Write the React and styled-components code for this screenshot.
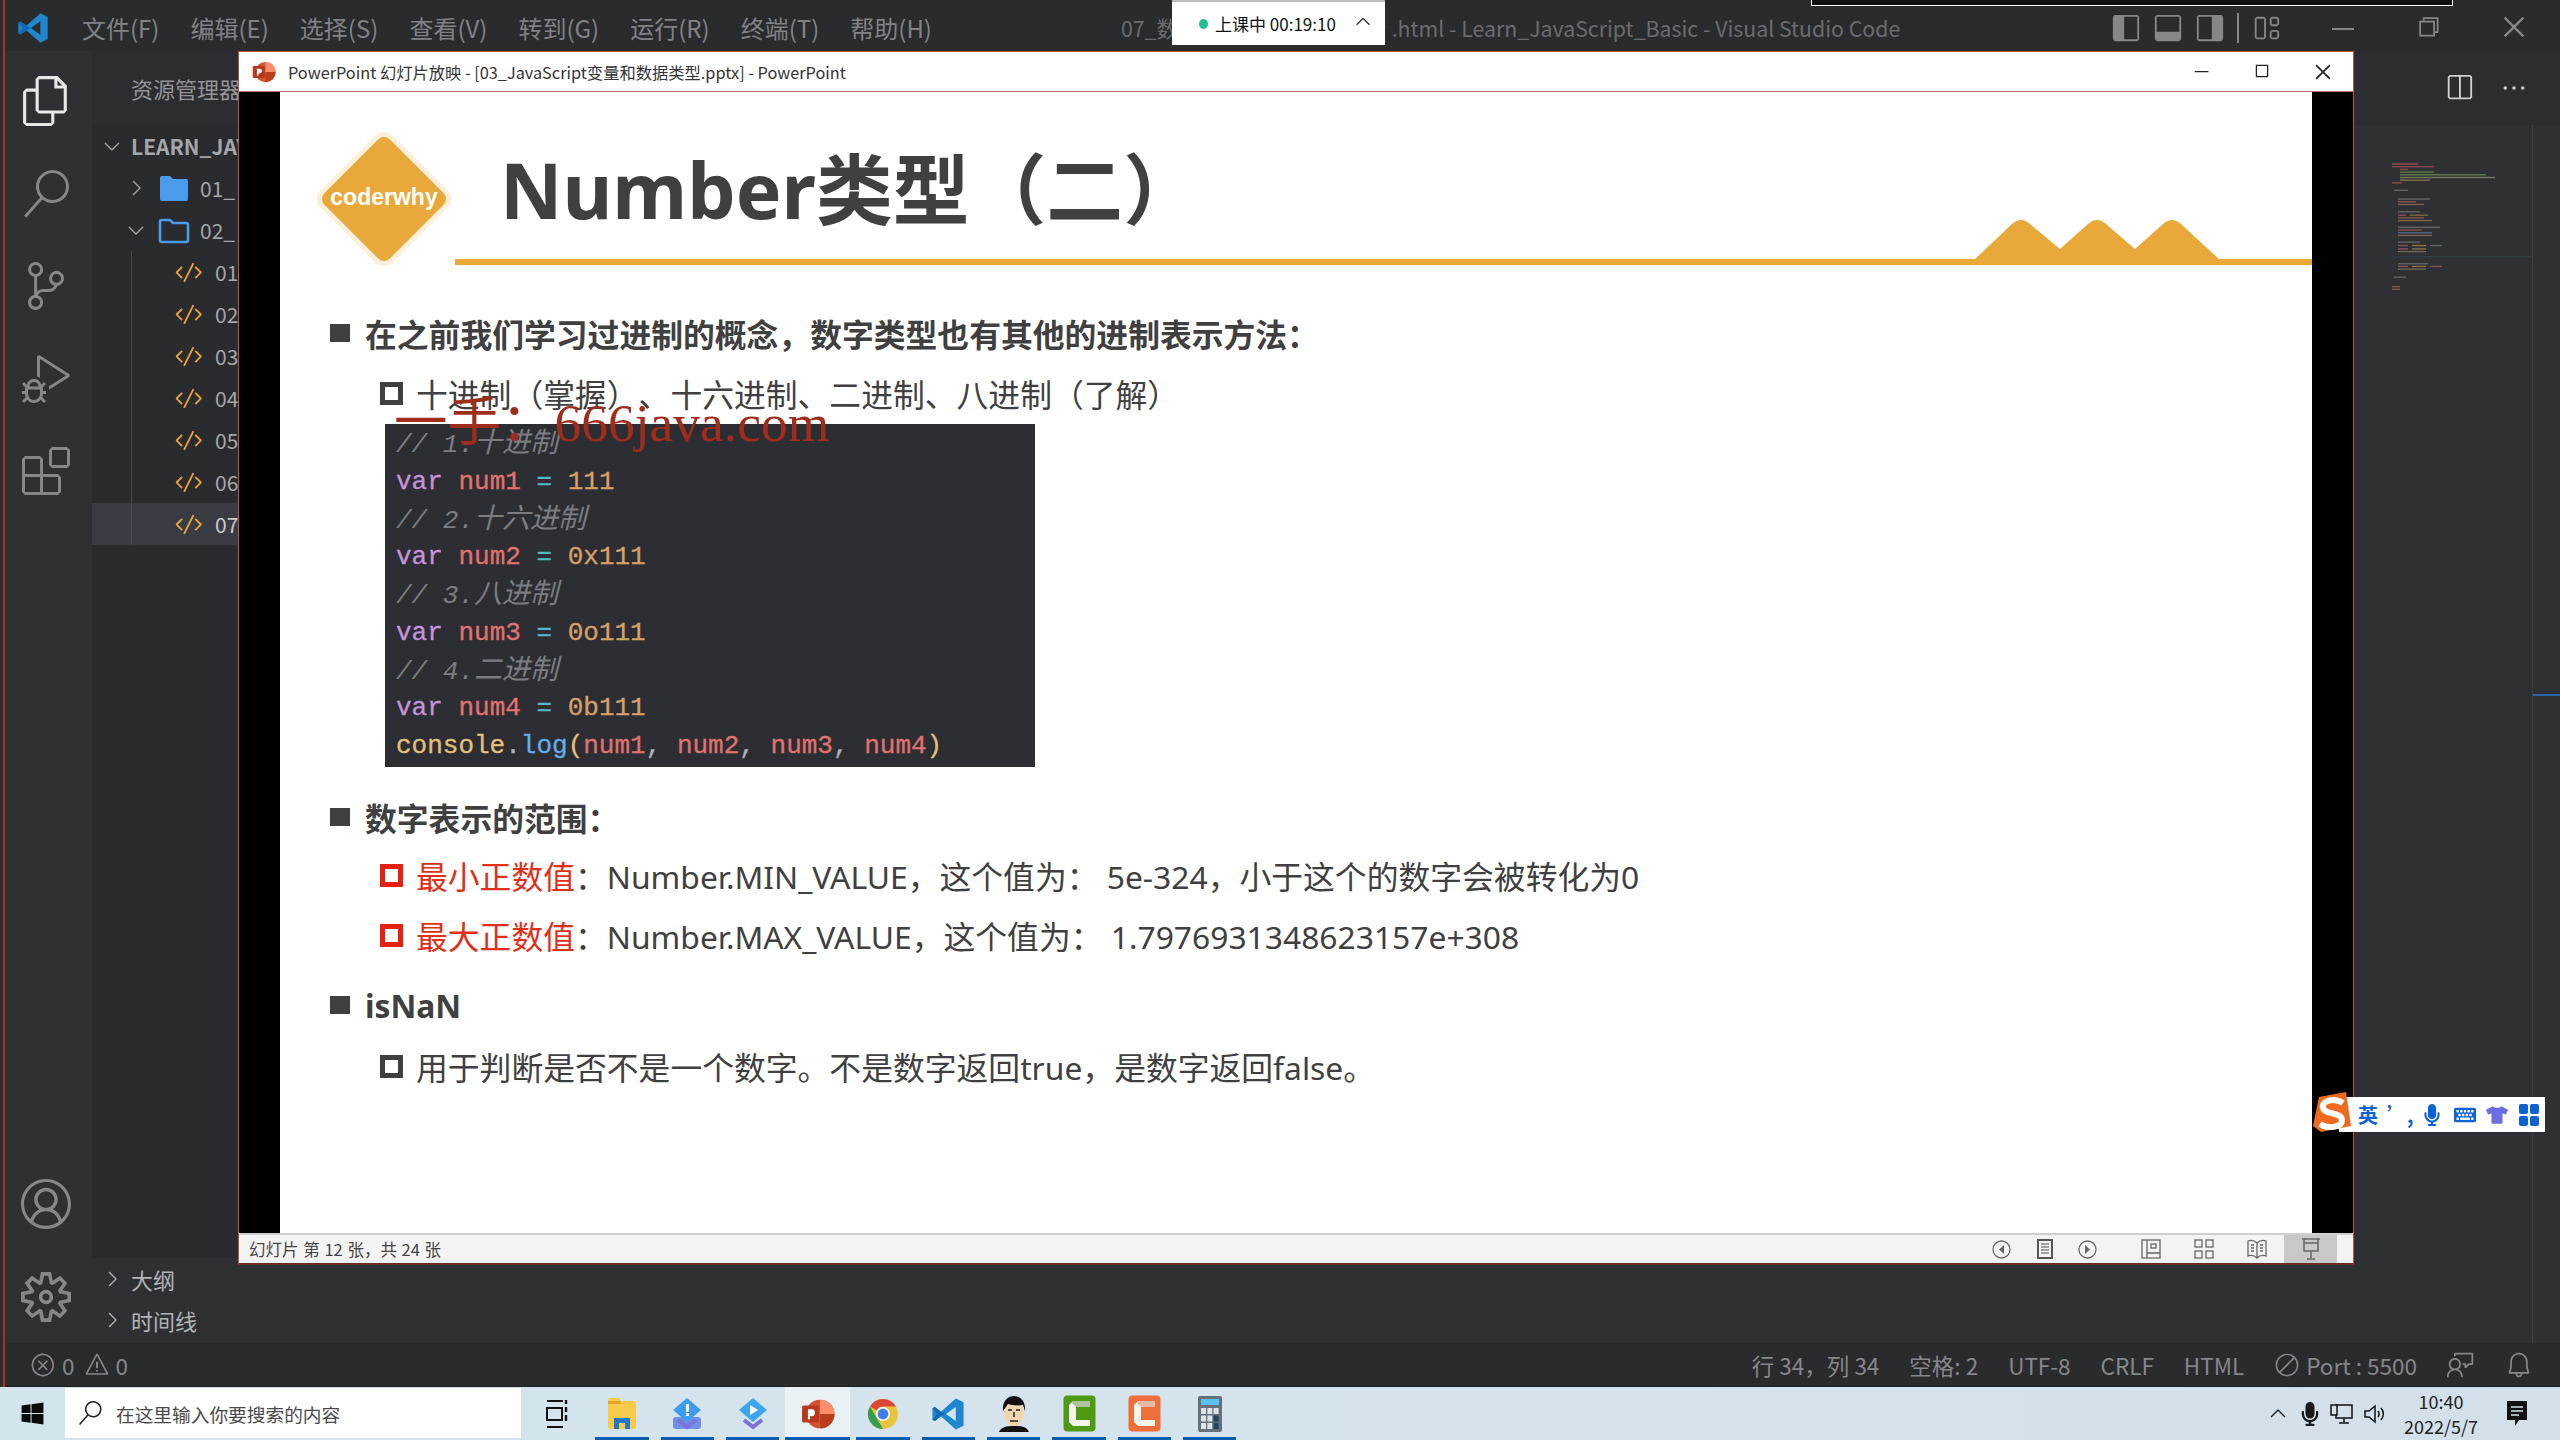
import React from 'react'
import styled, { createGlobalStyle } from 'styled-components'
import {
  VscFiles, VscSearch, VscSourceControl, VscDebugAlt, VscExtensions, VscAccount, VscSettingsGear,
  VscChevronRight, VscChevronDown, VscChevronUp, VscCode, VscError, VscWarning, VscBell, VscFeedback,
  VscSplitHorizontal, VscEllipsis, VscLayoutSidebarLeft, VscLayoutPanel, VscLayoutSidebarRight, VscLayout,
  VscChromeMinimize, VscChromeRestore, VscChromeClose, VscChromeMaximize, VscCircleSlash,
} from 'react-icons/vsc'
import { FaWindows, FaMicrophone, FaKeyboard, FaTshirt } from 'react-icons/fa'

const CJK = `"Noto Sans CJK SC", "Noto Sans", sans-serif`

const GlobalStyle = createGlobalStyle`
  html, body { margin: 0; padding: 0; background: #2a2b2d; }
  * { box-sizing: border-box; }
  body { font-family: ${CJK}; text-spacing-trim: space-all; }
`

const Page = styled.div`
  width: 2560px;
  height: 1440px;
  position: relative;
  overflow: hidden;
  display: flex;
  flex-direction: column;
  background: #2a2b2d;
`
const Code = styled.div`
  flex: 1;
  min-height: 0;
  margin-left: 3px;
  border-left: 2px solid #a8341f;
  display: flex;
  flex-direction: column;
  color: #85878a;
`
const TitleBar = styled.div`
  height: 51px;
  flex-shrink: 0;
  display: flex;
  align-items: center;
  background: #2a2b2d;
  padding: 4px 3px 0 12px;
  font-size: 21.3px;
`
const LogoSlot = styled.div`
  width: 65px;
  display: flex;
`
const MenuGroup = styled.div`
  width: 1039px;
  flex-shrink: 0;
  display: flex;
  gap: 31px;
`
const MenuItem = styled.span`
  white-space: nowrap;
  font-size: 24px;
  color: #808285;
`
const WindowTitle = styled.span`
  white-space: nowrap;
  color: #6a6c70;
`
const LayoutIcons = styled.div`
  margin-left: auto;
  display: flex;
  align-items: center;
  gap: 12px;
  color: #85878a;
`
const Separator = styled.div`
  width: 2px;
  height: 30px;
  background: #85878a;
`
const WinButtons = styled.div`
  margin-left: 18px;
  display: flex;
  color: #85878a;
`
const WinButton = styled.div`
  width: 86px;
  display: flex;
  justify-content: center;
`
const Body = styled.div`
  flex: 1;
  min-height: 0;
  display: flex;
`
const Activity = styled.div`
  width: 87px;
  flex-shrink: 0;
  padding: 4px 5px 0 0;
  display: flex;
  flex-direction: column;
  background: #2e3033;
`
const ActivityItem = styled.div`
  height: 92.5px;
  display: flex;
  align-items: center;
  justify-content: center;
  color: ${(p) => (p.$active ? '#e8e8e8' : '#85878a')};
`
const Spacer = styled.div`
  flex: 1;
`
const Sidebar = styled.div`
  width: 300px;
  flex-shrink: 0;
  display: flex;
  flex-direction: column;
  background: #2a2b2e;
  font-size: 21px;
  color: #a4a6a9;
`
const SidebarHead = styled.div`
  height: 74px;
  padding-left: 39px;
  display: flex;
  align-items: center;
  font-size: 22px;
  color: #939598;
  background: #2c2d30;
`
const Tree = styled.div`
  flex: 1;
`
const Row = styled.div`
  height: 42px;
  position: relative;
  display: flex;
  align-items: center;
  padding-left: ${(p) => p.$indent}px;
  gap: ${(p) => p.$gap}px;
  font-weight: ${(p) => (p.$bold ? 700 : 400)};
  background: ${(p) => (p.$selected ? '#3a3c43' : 'transparent')};
  color: ${(p) => (p.$selected ? '#c9cacc' : 'inherit')};
  white-space: nowrap;
  svg {
    flex-shrink: 0;
  }
`
const FileRow = styled(Row)`
  &::before {
    content: '';
    position: absolute;
    left: 39px;
    top: 0;
    bottom: 0;
    width: 1px;
    background: #45474b;
  }
`
const Panels = styled.div`
  height: 85px;
  background: #2f3034;
  font-weight: 600;
`
const PanelRow = styled(Row)`
  height: 41px;
  color: #b2b4b7;
  font-size: 22px;
`
const Editor = styled.div`
  flex: 1;
  display: flex;
  flex-direction: column;
`
const EditorHead = styled.div`
  height: 74px;
  display: flex;
  align-items: center;
  justify-content: flex-end;
  gap: 26px;
  padding-right: 32px;
  background: #2c2d30;
  color: #d0d1d3;
`
const EditorBody = styled.div`
  flex: 1;
  display: flex;
  justify-content: flex-end;
  background: #2f3034;
`
const Minimap = styled.div`
  width: 141px;
  padding-top: 37px;
  border-right: 1px solid #3e3f43;
`
const ScrollTrack = styled.div`
  width: 27px;
  padding-top: 569px;
`
const ScrollMark = styled.div`
  height: 2px;
  background: #2b66a5;
`
const StatusBar = styled.div`
  height: 44px;
  flex-shrink: 0;
  display: flex;
  align-items: center;
  padding: 0 27px 0 25px;
  font-size: 22.5px;
  background: #2a2b2d;
  color: #85878a;
  border-bottom: 1px solid #1d1d1f;
`
const StatusLeft = styled.div`
  display: flex;
  align-items: center;
  gap: 9px;
`
const StatusRight = styled.div`
  margin-left: auto;
  display: flex;
  align-items: center;
  gap: 30px;
`
const StatusPair = styled.span`
  display: flex;
  align-items: center;
  gap: 6px;
`

/* taskbar */
const Taskbar = styled.div`
  height: 53px;
  flex-shrink: 0;
  display: flex;
  background: linear-gradient(90deg, #d3e4ec, #d6e3ec 60%, #d2dfe9);
`
const StartButton = styled.div`
  width: 65px;
  display: flex;
  align-items: center;
  justify-content: center;
  color: #0b0b0b;
`
const SearchBox = styled.div`
  width: 456px;
  margin: 1px 0 2px;
  padding-left: 13px;
  display: flex;
  align-items: center;
  gap: 14px;
  background: #fff;
  color: #4a4a4a;
  font-size: 18.7px;
`
const TaskSlot = styled.div`
  width: 65.3px;
  position: relative;
  display: flex;
  align-items: center;
  justify-content: center;
  margin-left: ${(p) => (p.$first ? '3px' : 0)};
  background: ${(p) => (p.$active ? '#eaf1f5' : 'transparent')};
  &::after {
    content: '';
    display: ${(p) => (p.$running ? 'block' : 'none')};
    position: absolute;
    left: ${(p) => (p.$active ? 0 : '6px')};
    right: ${(p) => (p.$active ? 0 : '6px')};
    bottom: 0;
    height: 3px;
    background: #0a5cae;
  }
`
const Tray = styled.div`
  margin-left: auto;
  padding-right: 31px;
  display: flex;
  align-items: center;
  color: #1a1a1a;
`
const TrayIcon = styled.div`
  width: 32px;
  display: flex;
  justify-content: center;
`
const Clock = styled.div`
  width: 102px;
  margin-right: 13px;
  text-align: center;
  font-size: 18px;
  line-height: 25px;
  color: #222;
`

/* powerpoint window */
const PptWindow = styled.div`
  position: absolute;
  left: 238px;
  top: 51px;
  width: 2116px;
  height: 1214px;
  display: flex;
  flex-direction: column;
  border: 1px solid #b9583a;
  border-bottom: 2px solid #6d2a22;
  background: #000;
`
const PptTitle = styled.div`
  height: 40px;
  flex-shrink: 0;
  display: flex;
  align-items: center;
  gap: 12px;
  padding-left: 13px;
  background: #fff;
  border-bottom: 1px solid #a87a6e;
  font-size: 16.3px;
  color: #333;
`
const PptButtons = styled.div`
  margin-left: auto;
  display: flex;
  color: #222;
`
const PptButton = styled.div`
  width: 61px;
  display: flex;
  justify-content: center;
`
const Stage = styled.div`
  flex: 1;
  min-height: 0;
  padding: 0 41px;
  display: flex;
`
const Slide = styled.div`
  flex: 1;
  background: #fff;
  color: #404040;
  font-family: "Noto Sans", "Noto Sans CJK SC", sans-serif;
`
const SlideHead = styled.div`
  height: 173px;
  display: flex;
  align-items: flex-end;
  padding-left: 37px;
`
const Logo = styled.div`
  width: 134px;
  height: 134px;
  position: relative;
  margin-bottom: -1px;
  flex-shrink: 0;
  display: flex;
  align-items: center;
  justify-content: center;
  color: #fff;
  font: 700 23px "Liberation Sans", sans-serif;
  svg {
    position: absolute;
    inset: 0;
  }
  span {
    position: relative;
    margin-top: -3px;
  }
`
const HeadMain = styled.div`
  flex: 1;
  height: 173px;
  margin-left: 4px;
  padding: 30px 0 0 45px;
  position: relative;
  display: flex;
  align-items: center;
  border-bottom: 6px solid #e8a93a;
`
const SlideTitle = styled.h1`
  margin: 0;
  font-size: 76.8px;
  font-weight: 700;
  color: #404040;
  line-height: 1;
  white-space: nowrap;
`
const Mountains = styled.svg`
  position: absolute;
  right: 92px;
  bottom: -6px;
`
const SlideBody = styled.div`
  padding: 46px 0 0 50px;
`
const Bullet = styled.div`
  height: 44px;
  display: flex;
  align-items: center;
  margin-top: ${(p) => p.$top || 0}px;
  margin-left: ${(p) => (p.$sub ? 50 : 0)}px;
  gap: ${(p) => (p.$sub ? 13 : 15)}px;
  font-size: 31.8px;
  font-weight: ${(p) => (p.$sub ? 400 : 700)};
  white-space: nowrap;
`
const SolidMark = styled.div`
  width: 20px;
  height: 18px;
  background: #404040;
`
const HollowMark = styled.div`
  width: 23px;
  height: 23px;
  border: 5px solid ${(p) => (p.$red ? '#e5200f' : '#404040')};
`
const Red = styled.span`
  color: #e0301a;
`
const Pre = styled.span`
  white-space: pre;
`
const CodeBlock = styled.div`
  width: 650px;
  height: 343px;
  margin: 9px 0 0 55px;
  padding: 2px 0 0 11px;
  position: relative;
  background: #2d2e33;
  font: 26px/37.75px "Liberation Mono", "Noto Sans CJK SC", monospace;
  -webkit-text-stroke: 0.3px currentColor;
`
const CodeLine = styled.div`
  height: 37.75px;
  white-space: pre;
`
const Tok = styled.span`
  color: ${(p) => p.$c};
`
const Comment = styled.span`
  color: #7a7d84;
  font-style: italic;
  -webkit-text-stroke: 0;
  b {
    font-weight: 400;
    font-size: 28px;
    line-height: 1;
    font-family: ${CJK};
  }
`
const Watermark = styled.div`
  position: absolute;
  left: 9px;
  top: -33px;
  font: 53.5px/1.2 "Liberation Serif", "Noto Sans CJK SC", serif;
  color: #a02c1c;
  white-space: nowrap;
  -webkit-text-stroke: 0;
`
const PptStatus = styled.div`
  height: 30px;
  flex-shrink: 0;
  display: flex;
  align-items: center;
  padding-left: 10px;
  background: #f3f3f3;
  border-top: 2px solid #cfcfcf;
  color: #444;
  font-size: 16.5px;
  word-spacing: 1px;
`
const ViewIcons = styled.div`
  margin-left: auto;
  margin-right: 16px;
  display: flex;
  height: 100%;
  color: #666;
`
const ViewIcon = styled.div`
  width: ${(p) => p.$w}px;
  margin-left: ${(p) => p.$gap || 0}px;
  display: flex;
  align-items: center;
  justify-content: center;
  background: ${(p) => (p.$on ? '#c8c8c8' : 'transparent')};
`

/* floats */
const ClassPill = styled.div`
  position: absolute;
  left: 1172px;
  top: 0;
  width: 213px;
  height: 45px;
  padding-left: 27px;
  display: flex;
  align-items: center;
  background: #fff;
  border-top: 2px solid #bbb;
  font-size: 17px;
  color: #111;
`
const GreenDot = styled.i`
  width: 9px;
  height: 10px;
  margin-right: 7px;
  border-radius: 50%;
  background: #1fc08e;
`
const PillArrow = styled.div`
  margin-left: 16px;
  margin-top: -3px;
  display: flex;
  color: #222;
`
const TopStrip = styled.div`
  position: absolute;
  left: 1811px;
  top: 0;
  width: 642px;
  height: 6px;
  background: #111;
  border: 1px solid #fff;
  border-top: 0;
`
const ImeBar = styled.div`
  position: absolute;
  left: 2339px;
  top: 1097px;
  width: 206px;
  height: 35px;
  padding-left: 13px;
  display: flex;
  align-items: center;
  background: #fff;
  color: #0d62d6;
  font-size: 20px;
  font-weight: 700;
`
const ImeLogo = styled.svg`
  position: absolute;
  left: -29px;
  top: -6px;
`
const ImeItem = styled.div`
  width: 32.4px;
  display: flex;
  justify-content: center;
  color: ${(p) => p.$c || 'inherit'};
`

function VsLogo({ size }) {
  return (
    <svg width={size} height={size} viewBox="0 0 24 24">
      <path fillRule="evenodd" fill="#1f86d2" d="M17.5 1 23 3.7v16.6L17.5 23 7 13.6l-4.3 3.3L1 16V8l1.7-.9L7 10.4zM17.5 7l-7 5 7 5z" />
      <path fill="#0f6bb4" d="M1 8l1.7-.9L7 10.4 10.5 12 7 13.6l-4.3 3.3L1 16l3.5-4z" />
    </svg>
  )
}

function FolderIcon({ open }) {
  return (
    <svg width="32" height="32" viewBox="0 0 32 32">
      {open ? (
        <path d="M2 8a2 2 0 0 1 2-2h8l3 3h13a2 2 0 0 1 2 2v15a2 2 0 0 1-2 2H4a2 2 0 0 1-2-2z" fill="none" stroke="#4a9bea" strokeWidth="2.6" />
      ) : (
        <path d="M2 6a2 2 0 0 1 2-2h8l3 3h13a2 2 0 0 1 2 2v18a2 2 0 0 1-2 2H4a2 2 0 0 1-2-2z" fill="#4a9bea" />
      )}
    </svg>
  )
}

function PptIcon({ size }) {
  return (
    <svg width={size} height={size} viewBox="0 0 32 32">
      <circle cx="18" cy="16" r="13.5" fill="#d35230" />
      <path d="M18 2.5A13.5 13.5 0 0 1 31.5 16H18z" fill="#ff8f6b" />
      <path d="M18 16h13.5A13.5 13.5 0 0 1 18 29.5z" fill="#ba3e1e" />
      <rect x="1" y="8" width="16" height="16" rx="1.5" fill="#b7381a" />
      <path d="M6.5 21V11.500h3.500a3 3 0 0 1 0 6.500H8.500V21z" fill="#fff" />
    </svg>
  )
}

function ChromeIcon() {
  return (
    <svg width="32" height="32" viewBox="0 0 32 32">
      <circle cx="16" cy="16" r="15" fill="#e8c33b" />
      <path d="M16 1a15 15 0 0 1 13 7.500H16a7.500 7.500 0 0 0-6.500 3.800L3 8.500A15 15 0 0 1 16 1z" fill="#dc4638" />
      <path d="M3 8.500 9.500 19.800 16 31A15 15 0 0 1 3 8.500z" fill="#2f9e4f" />
      <circle cx="16" cy="16" r="7" fill="#fff" />
      <circle cx="16" cy="16" r="5.400" fill="#3f7de8" />
    </svg>
  )
}

function CamtasiaIcon({ bg, dark }) {
  return (
    <svg width="33" height="37" viewBox="0 0 33 37">
      <rect x="0.500" y="0.500" width="32" height="36" rx="4" fill={bg} />
      <path d="M27 6H10L6 10v17l4 4h17v-6H13V12h14z" fill="#f3f5ea" />
      <path d="M27 12H13l-4-4 1-2h17z" fill={dark} opacity="0.35" />
    </svg>
  )
}

function BlueAppIcon({ play }) {
  return (
    <svg width="32" height="34" viewBox="0 0 32 34">
      {!play && <rect x="2" y="20" width="28" height="12" rx="3" fill="#6f8fe8" />}
      <path d="M16 1 30 13 16 25 2 13z" fill={play ? '#3ba7f0' : '#3a9df0'} />
      <path d="M7 23l9 7 9-7" fill="none" stroke="#7b72dc" strokeWidth="4" />
      <path d={play ? 'M13 8l8 5-8 5z' : 'M15 7h3v8h-3zM15 16h3v3h-3z'} fill="#fff" />
    </svg>
  )
}

function FaceIcon() {
  return (
    <svg width="30" height="36" viewBox="0 0 30 36">
      <path d="M0 36c2-5 7-6 15-6s13 1 15 6z" fill="#111" />
      <ellipse cx="15" cy="17" rx="10" ry="13" fill="#f1d5b1" />
      <path d="M4 15C3 5 9 0 15 0s12 5 11 15l-2-6c-5 1-12 0-15-1z" fill="#111" />
      <path d="M9 14h4M17 14h4M15 16v5M11 25h8" stroke="#222" strokeWidth="1.500" />
    </svg>
  )
}

function CalcIcon() {
  const cells = [0, 1, 2]
  return (
    <svg width="24" height="36" viewBox="0 0 24 36">
      <rect width="24" height="36" rx="2" fill="#66707c" />
      <rect x="3" y="3" width="18" height="6" fill="#59c2f0" />
      {cells.map((r) =>
        cells.map((c) => <rect key={`${r}${c}`} x={3 + c * 6.300} y={12 + r * 7.500} width="5" height="6" fill={c === 2 && r > 0 ? '#24425f' : '#dfe3e8'} />)
      )}
    </svg>
  )
}

function FolderApp() {
  return (
    <svg width="30" height="34" viewBox="0 0 30 34">
      <path d="M1 3a2 2 0 0 1 2-2h9l2 3h13a2 2 0 0 1 2 2v24a2 2 0 0 1-2 2H3a2 2 0 0 1-2-2z" fill="#f7ca4a" />
      <path d="M1 4h12l1 3H1z" fill="#dca52a" />
      <path d="M7 32V21h16v11h-5v-6h-6v6z" fill="#1f78c8" />
    </svg>
  )
}

function TaskViewIcon() {
  return (
    <svg width="22" height="28" viewBox="0 0 22 28" fill="none" stroke="#111" strokeWidth="2">
      <path d="M1 1h16M1 27h16" />
      <rect x="1" y="8" width="15" height="12" />
      <path d="M20 0v4M20 7v5M20 15v6" strokeWidth="2.400" />
    </svg>
  )
}

const round = (p) => <svg width="19" height="19" viewBox="0 0 19 19" fill="none" stroke="#666" strokeWidth="1.300"><circle cx="9.500" cy="9.500" r="8.500" /><path d={p} fill="#666" stroke="none" /></svg>

const minimapLines = [
  [42, 0, 26, '#c65b5b'], [46, 0, 42, '#a84f4f'], [50, 8, 8, '#b25555'], [54, 8, 34, '#73995a'], [58, 8, 86, '#6f9a58'], [62, 8, 95, '#8a9a70'], [66, 8, 30, '#a58b55'], [70, 0, 10, '#b05050'],
  [81, 2, 14, '#777'], [94, 6, 32, '#777'], [98, 6, 18, '#a8665c'], [102, 6, 26, '#a86f60'], [113, 6, 22, '#777'], [118, 6, 8, '#b05b60'], [118, 18, 18, '#9b7a4e'],
  [122, 6, 26, '#a5605c'], [126, 6, 34, '#a27a4e'], [136, 6, 42, '#777'], [140, 6, 24, '#a65d5d'], [144, 6, 34, '#4f7fb0'], [148, 6, 34, '#a66d5d'],
  [158, 6, 22, '#777'], [163, 6, 10, '#a5605c'], [163, 20, 14, '#b0864e'], [163, 38, 12, '#777'], [168, 6, 10, '#a5605c'], [168, 20, 14, '#b0864e'], [172, 6, 28, '#8a7a5a'],
  [190, 6, 30, '#777'], [194, 6, 10, '#a5605c'], [194, 20, 14, '#b0864e'], [194, 38, 12, '#a5605c'], [198, 6, 28, '#8a7a5a'], [210, 2, 12, '#777'], [224, 0, 8, '#a5605c'], [228, 0, 8, '#a5605c'],
]

function App() {
  const files = ['01_', '02_', '03_', '04_', '05_', '06_', '07_']
  const menus = ['文件(F)', '编辑(E)', '选择(S)', '查看(V)', '转到(G)', '运行(R)', '终端(T)', '帮助(H)']
  const nums = [
    ['// 1.', '十进制', '1', '111'],
    ['// 2.', '十六进制', '2', '0x111'],
    ['// 3.', '八进制', '3', '0o111'],
    ['// 4.', '二进制', '4', '0b111'],
  ]
  return (
    <Page>
      <GlobalStyle />
      <Code>
        <TitleBar>
          <LogoSlot><VsLogo size={32} /></LogoSlot>
          <MenuGroup>
            {menus.map((m) => <MenuItem key={m}>{m}</MenuItem>)}
          </MenuGroup>
          <WindowTitle>07_数字类型的Number表示 .html - Learn_JavaScript_Basic - Visual Studio Code</WindowTitle>
          <LayoutIcons>
            <VscLayoutSidebarLeft size={30} />
            <VscLayoutPanel size={30} />
            <VscLayoutSidebarRight size={30} />
            <Separator />
            <VscLayout size={30} />
          </LayoutIcons>
          <WinButtons>
            <WinButton><VscChromeMinimize size={32} /></WinButton>
            <WinButton><VscChromeRestore size={28} /></WinButton>
            <WinButton><VscChromeClose size={30} /></WinButton>
          </WinButtons>
        </TitleBar>
        <Body>
          <Activity>
            <ActivityItem $active><VscFiles size={50} /></ActivityItem>
            <ActivityItem><VscSearch size={48} /></ActivityItem>
            <ActivityItem><VscSourceControl size={48} /></ActivityItem>
            <ActivityItem><VscDebugAlt size={48} /></ActivityItem>
            <ActivityItem><VscExtensions size={48} /></ActivityItem>
            <Spacer />
            <ActivityItem><VscAccount size={50} /></ActivityItem>
            <ActivityItem><VscSettingsGear size={50} /></ActivityItem>
          </Activity>
          <Sidebar>
            <SidebarHead>资源管理器</SidebarHead>
            <Tree>
              <Row $indent={8} $gap={7} $bold><VscChevronDown size={24} />LEARN_JAVASCRIPT_BASIC</Row>
              <Row $indent={32} $gap={10}><VscChevronRight size={24} /><FolderIcon />01_</Row>
              <Row $indent={32} $gap={10}><VscChevronDown size={24} /><FolderIcon open />02_</Row>
              {files.map((f, i) => (
                <FileRow key={f} $indent={82} $gap={11} $selected={i === 6}>
                  <VscCode size={30} color="#e8a33d" />{f}
                </FileRow>
              ))}
            </Tree>
            <Panels>
              <PanelRow $indent={8} $gap={7}><VscChevronRight size={24} />大纲</PanelRow>
              <PanelRow $indent={8} $gap={7}><VscChevronRight size={24} />时间线</PanelRow>
            </Panels>
          </Sidebar>
          <Editor>
            <EditorHead>
              <VscSplitHorizontal size={30} />
              <VscEllipsis size={28} />
            </EditorHead>
            <EditorBody>
              <Minimap>
                <svg width="140" height="128" viewBox="0 40 140 190" preserveAspectRatio="none" opacity="0.75">
                  {minimapLines.map(([y, x, w, c]) => <rect key={`${y}-${x}`} x={x} y={y} width={w} height="2" fill={c} />)}
                  <rect x="0" y="180" width="140" height="1.500" fill="#33465c" />
                </svg>
              </Minimap>
              <ScrollTrack><ScrollMark /></ScrollTrack>
            </EditorBody>
          </Editor>
        </Body>
        <StatusBar>
          <StatusLeft>
            <StatusPair><VscError size={26} />0</StatusPair>
            <StatusPair><VscWarning size={26} />0</StatusPair>
          </StatusLeft>
          <StatusRight>
            <span>行 34，列 34</span>
            <span>空格: 2</span>
            <span>UTF-8</span>
            <span>CRLF</span>
            <span>HTML</span>
            <StatusPair><VscCircleSlash size={26} />Port : 5500</StatusPair>
            <VscFeedback size={28} />
            <VscBell size={28} />
          </StatusRight>
        </StatusBar>
      </Code>

      <Taskbar>
        <StartButton><FaWindows size={25} /></StartButton>
        <SearchBox>
          <VscSearch size={24} color="#222" />
          在这里输入你要搜索的内容
        </SearchBox>
        <TaskSlot $first><TaskViewIcon /></TaskSlot>
        <TaskSlot $running><FolderApp /></TaskSlot>
        <TaskSlot $running><BlueAppIcon /></TaskSlot>
        <TaskSlot $running><BlueAppIcon play /></TaskSlot>
        <TaskSlot $running $active><PptIcon size={34} /></TaskSlot>
        <TaskSlot $running><ChromeIcon /></TaskSlot>
        <TaskSlot $running><VsLogo size={34} /></TaskSlot>
        <TaskSlot $running><FaceIcon /></TaskSlot>
        <TaskSlot $running><CamtasiaIcon bg="#4e9a12" dark="#2c6a08" /></TaskSlot>
        <TaskSlot $running><CamtasiaIcon bg="#ef6f3c" dark="#c84d20" /></TaskSlot>
        <TaskSlot $running><CalcIcon /></TaskSlot>
        <Tray>
          <TrayIcon><VscChevronUp size={24} /></TrayIcon>
          <TrayIcon><FaMicrophone size={24} /></TrayIcon>
          <TrayIcon>
            <svg width="24" height="24" viewBox="0 0 24 24" fill="none" stroke="#111" strokeWidth="1.500"><rect x="6" y="3" width="16" height="13" /><path d="M14 16v4M9 21h10" /><rect x="1" y="3" width="6" height="10" fill="#d5e2eb" /></svg>
          </TrayIcon>
          <TrayIcon>
            <svg width="24" height="24" viewBox="0 0 24 24" fill="none" stroke="#111" strokeWidth="1.500"><path d="M3 9h4l6-5v16l-6-5H3z" /><path d="M16 9a5 5 0 0 1 0 6M19 6a9 9 0 0 1 0 12" /></svg>
          </TrayIcon>
          <Clock>10:40<br />2022/5/7</Clock>
          <svg width="24" height="28" viewBox="0 0 24 28"><path d="M2 1h20v19h-8l-4 6v-6H2z" fill="#111" /><path d="M6 7h12M6 11h12M6 15h8" stroke="#d5e2eb" strokeWidth="1.600" /></svg>
        </Tray>
      </Taskbar>

      <PptWindow>
        <PptTitle>
          <PptIcon size={24} />
          PowerPoint 幻灯片放映 - [03_JavaScript变量和数据类型.pptx] - PowerPoint
          <PptButtons>
            <PptButton><VscChromeMinimize size={20} /></PptButton>
            <PptButton><VscChromeMaximize size={20} /></PptButton>
            <PptButton><VscChromeClose size={22} /></PptButton>
          </PptButtons>
        </PptTitle>
        <Stage>
          <Slide>
            <SlideHead>
              <Logo>
                <svg width="134" height="134" viewBox="0 0 134 134">
                  <path d="M67 13 121 67 67 121 13 67z" fill="#fbf0dc" stroke="#fbf0dc" strokeWidth="26" strokeLinejoin="round" />
                  <path d="M67 13 121 67 67 121 13 67z" fill="#e8a93a" stroke="#e8a93a" strokeWidth="16" strokeLinejoin="round" />
                </svg>
                <span>coderwhy</span>
              </Logo>
              <HeadMain>
                <SlideTitle>Number类型（二）</SlideTitle>
                <Mountains width="246" height="48" viewBox="0 0 246 48">
                  <path d="M0 43 38 7Q47 -1 56 7L86 32 114 7Q123 -1 132 7L161 32 189 7Q198 -1 207 7L246 43V48H0z" fill="#e8a93a" />
                </Mountains>
              </HeadMain>
            </SlideHead>
            <SlideBody>
              <Bullet><SolidMark />在之前我们学习过进制的概念，数字类型也有其他的进制表示方法：</Bullet>
              <Bullet $sub $top={16}><HollowMark />十进制（掌握）、十六进制、二进制、八进制（了解）</Bullet>
              <CodeBlock>
                {nums.map(([c, han, n, v]) => (
                  <React.Fragment key={n}>
                    <CodeLine><Comment>{c}<b>{han}</b></Comment></CodeLine>
                    <CodeLine>
                      <Tok $c="#c792dc">var </Tok><Tok $c="#e0726f">num{n} </Tok><Tok $c="#56b6c2">= </Tok><Tok $c="#d8a066">{v}</Tok>
                    </CodeLine>
                  </React.Fragment>
                ))}
                <CodeLine>
                  <Tok $c="#e5c07b">console</Tok><Tok $c="#abb2bf">.</Tok><Tok $c="#61afef">log</Tok><Tok $c="#e5c07b">(</Tok>
                  <Tok $c="#e0726f">num1</Tok><Tok $c="#abb2bf">, </Tok><Tok $c="#e0726f">num2</Tok><Tok $c="#abb2bf">, </Tok><Tok $c="#e0726f">num3</Tok><Tok $c="#abb2bf">, </Tok><Tok $c="#e0726f">num4</Tok><Tok $c="#e5c07b">)</Tok>
                </CodeLine>
                <Watermark>一手：666java.com</Watermark>
              </CodeBlock>
              <Bullet $top={28}><SolidMark />数字表示的范围：</Bullet>
              <Bullet $sub $top={14}><HollowMark $red /><Pre><Red>最小正数值</Red>：Number.MIN_VALUE，这个值为： 5e-324，小于这个的数字会被转化为0</Pre></Bullet>
              <Bullet $sub $top={16}><HollowMark $red /><Pre><Red>最大正数值</Red>：Number.MAX_VALUE，这个值为： 1.7976931348623157e+308</Pre></Bullet>
              <Bullet $top={26}><SolidMark />isNaN</Bullet>
              <Bullet $sub $top={17}><HollowMark />用于判断是否不是一个数字。不是数字返回true，是数字返回false。</Bullet>
            </SlideBody>
          </Slide>
        </Stage>
        <PptStatus>
          幻灯片 第 12 张，共 24 张
          <ViewIcons>
            <ViewIcon $w={43}>{round('M12 5v9L7 9.500z')}</ViewIcon>
            <ViewIcon $w={43}><svg width="16" height="20" viewBox="0 0 16 20" fill="none" stroke="#555"><rect x="1" y="1" width="14" height="18" strokeWidth="2" /><path d="M4 5h8M4 8h8M4 11h8M4 14h8" /></svg></ViewIcon>
            <ViewIcon $w={43}>{round('M7 5v9l5-4.500z')}</ViewIcon>
            <ViewIcon $w={54} $gap={15}><svg width="20" height="20" viewBox="0 0 20 20" fill="none" stroke="#666" strokeWidth="1.300"><rect x="1" y="1" width="18" height="18" /><path d="M6 1v18M6 14h13" /><rect x="10" y="5" width="5" height="4" /></svg></ViewIcon>
            <ViewIcon $w={52}><svg width="20" height="20" viewBox="0 0 20 20" fill="none" stroke="#666" strokeWidth="1.300"><rect x="1" y="1" width="7" height="7" /><rect x="12" y="1" width="7" height="7" /><rect x="1" y="12" width="7" height="7" /><rect x="12" y="12" width="7" height="7" /></svg></ViewIcon>
            <ViewIcon $w={54}><svg width="20" height="20" viewBox="0 0 20 20" fill="none" stroke="#666" strokeWidth="1.300"><path d="M10 4C7 1 4 1 1 2v15c3-1 6-1 9 2 3-3 6-3 9-2V2c-3-1-6-1-9 2zM10 4v15M4 6h3M4 9h3M4 12h3M13 6h3M13 9h3M13 12h3" /></svg></ViewIcon>
            <ViewIcon $w={53} $on><svg width="20" height="24" viewBox="0 0 20 24" fill="none" stroke="#666" strokeWidth="1.500"><path d="M1 2h18M3 2v12h14V2M3 6h14M10 14v7M6 22h8" /></svg></ViewIcon>
          </ViewIcons>
        </PptStatus>
      </PptWindow>

      <TopStrip />
      <ClassPill>
        <GreenDot />上课中 00:19:10
        <PillArrow><VscChevronUp size={22} /></PillArrow>
      </ClassPill>
      <ImeBar>
        <ImeLogo width="42" height="42" viewBox="0 0 42 42">
          <path d="M9 6 36 1l5 34-30 6-8-6z" fill="#ef6a1c" />
          <path d="M33 12C24 6 11 10 13 17s19 4 19 12-15 9-22 4" fill="none" stroke="#fff" strokeWidth="6" />
        </ImeLogo>
        <ImeItem>英</ImeItem>
        <ImeItem>’,</ImeItem>
        <ImeItem><FaMicrophone size={22} /></ImeItem>
        <ImeItem><FaKeyboard size={22} /></ImeItem>
        <ImeItem $c="#6c6fe0"><FaTshirt size={22} /></ImeItem>
        <ImeItem>
          <svg width="20" height="22" viewBox="0 0 20 22" fill="#0d62d6"><rect width="9" height="10" rx="2" /><rect x="11" width="9" height="10" rx="2" /><rect y="12" width="9" height="10" rx="2" /><rect x="11" y="12" width="9" height="10" rx="2" /></svg>
        </ImeItem>
      </ImeBar>
    </Page>
  )
}

export default App
